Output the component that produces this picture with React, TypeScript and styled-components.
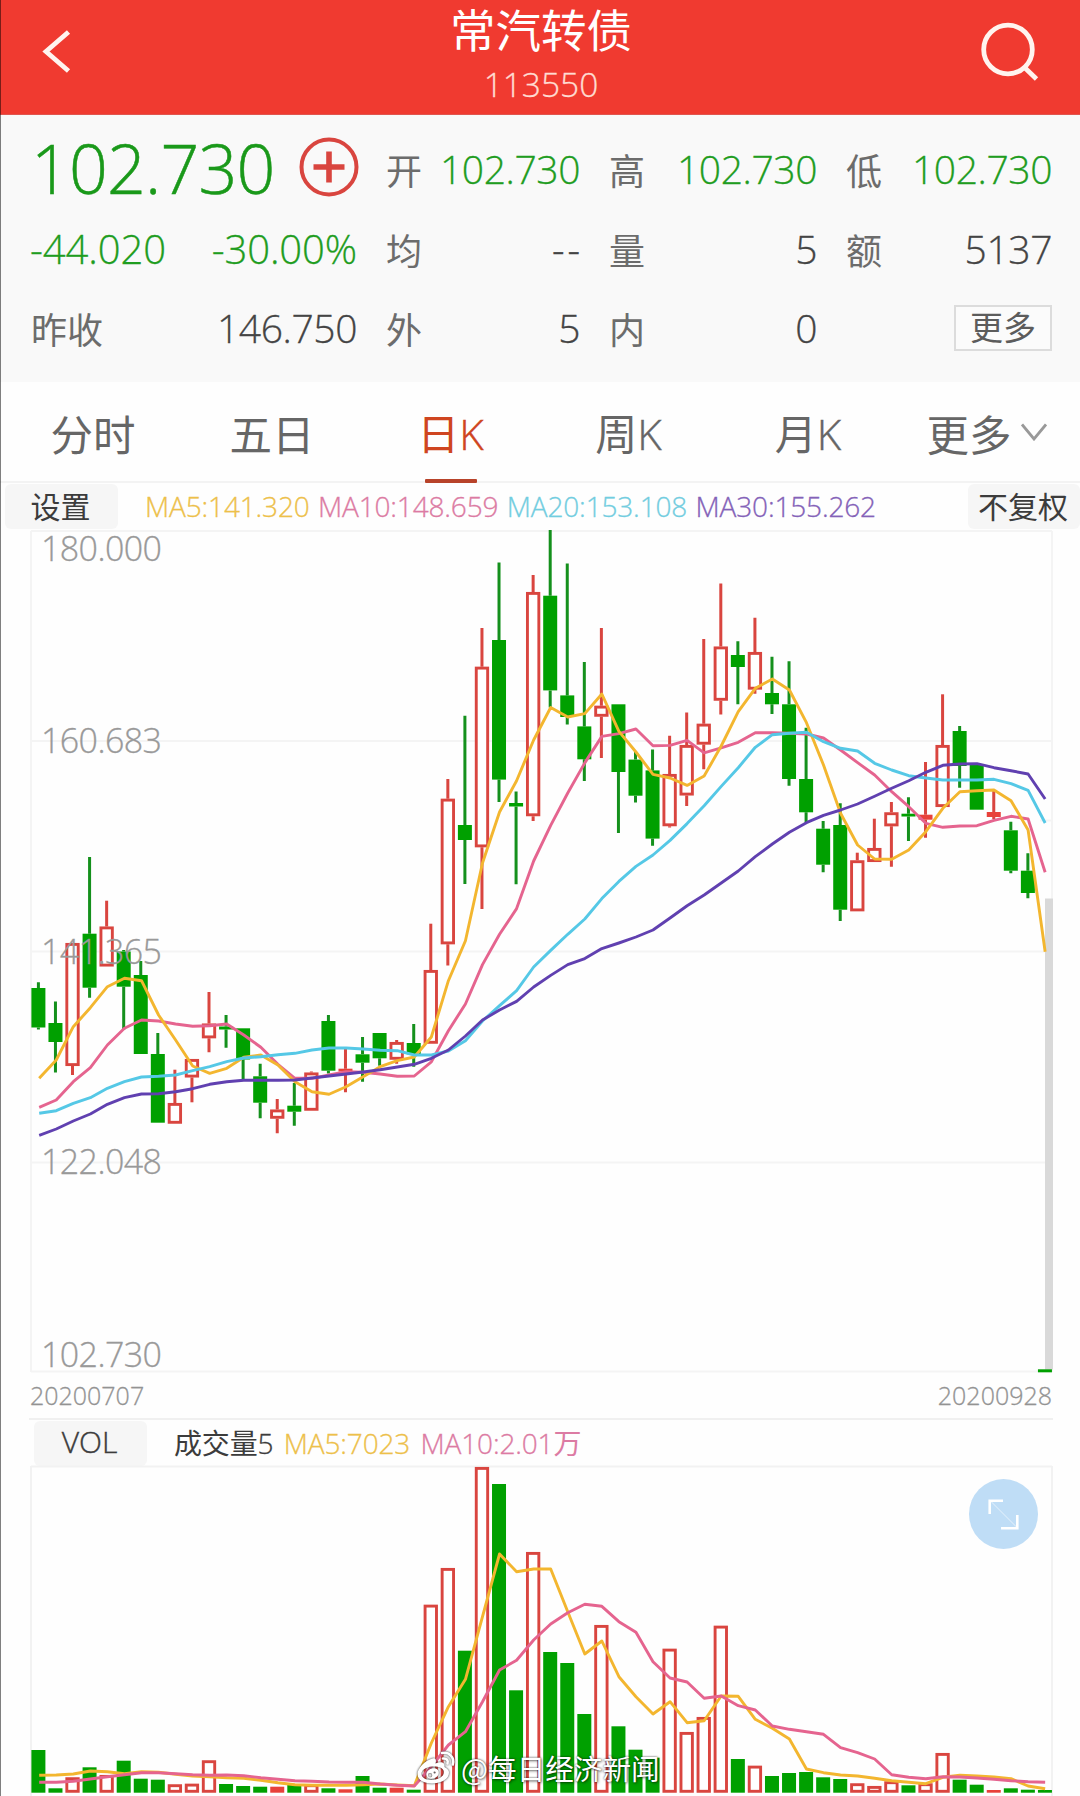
import React from "react";
import styled, { createGlobalStyle } from "styled-components";

const LATIN = `"Open Sans", "Noto Sans", "Noto Sans CJK SC", sans-serif`;
const CJK = `"Noto Sans CJK SC", "Open Sans", sans-serif`;

const RED = "#d9453f";
const GREEN = "#00a000";
const MA_COLORS = { ma5: "#f3b62f", ma10: "#e5648f", ma20: "#55c8e6", ma30: "#6040b0" };

const GlobalStyle = createGlobalStyle`
  * { box-sizing: border-box; }
  body { margin: 0; background: #fefefe; }
`;

const Page = styled.main`
  position: relative;
  width: 1080px;
  height: 1796px;
  overflow: hidden;
  display: flex;
  flex-direction: column;
  background: #fefefe;
  font-family: ${LATIN};
  font-weight: 300;
  -webkit-text-stroke: 0.3px currentColor;
  white-space: nowrap;
`;

const EdgeLine = styled.div`
  position: absolute;
  left: 0;
  top: 0;
  width: 1px;
  height: 100%;
  background: rgba(0, 0, 0, 0.5);
`;

/* ---------- header ---------- */
const Header = styled.header`
  flex: none;
  height: 115px;
  display: grid;
  grid-template-columns: 120px 1fr 120px;
  background: #f03a30;
  border-bottom: 1px solid #e0564f;
  color: #fff;
`;
const HeaderIcon = styled.svg`
  display: block;
  width: 120px;
  height: 114px;
  fill: none;
  stroke: #fff4ef;
  stroke-width: 4.8;
`;
const TitleBlock = styled.div`
  display: flex;
  flex-direction: column;
  align-items: center;
`;
const Title = styled.h1`
  margin: 5px 0 0 2px;
  font: 400 45.5px/56px Roboto, "Noto Sans CJK SC", sans-serif;
  -webkit-text-stroke: 0;
`;
const Code = styled.div`
  margin: -2px 0 0 2px;
  font-size: 33.5px;
  line-height: 50px;
  color: #ffdcd2;
`;

/* ---------- quote panel ---------- */
const Quote = styled.section`
  flex: none;
  height: 267px;
  padding: 14px 28px 0 31px;
  display: grid;
  grid-template-columns: 326px 223px 237px 1fr;
  grid-template-rows: 80px 79px 79px;
  background: #f9f9f9;
`;
const Cell = styled.div<{ $inset?: number }>`
  display: flex;
  align-items: center;
  justify-content: space-between;
  padding-left: ${(p) => p.$inset ?? 0}px;
`;
const Price = styled.span`
  margin: -3px 0 0 0;
  font-size: 68px;
  line-height: 76px;
  letter-spacing: -0.8px;
  -webkit-text-stroke: 0.5px currentColor;
  color: #1a991a;
`;
const Label = styled.span`
  font: 400 36px/44px ${CJK};
  -webkit-text-stroke: 0;
  color: #6c6c6c;
`;
const Value = styled.span<{ $down?: boolean; $wide?: boolean; $empty?: boolean }>`
  margin-left: ${(p) => (p.$wide ? -1 : 0)}px;
  margin-right: ${(p) => (p.$empty ? -3 : 0)}px;
  font-size: ${(p) => (p.$wide ? 40 : 39)}px;
  line-height: 50px;
  letter-spacing: ${(p) => (p.$empty ? 3 : p.$wide ? -0.1 : -0.4)}px;
  color: ${(p) => (p.$down ? "#1f9d1f" : "#444")};
`;
const AddIcon = styled.svg`
  width: 60px;
  height: 60px;
  margin: -4px -2px 0 0;
  fill: none;
  stroke: ${RED};
`;
const MoreButton = styled.button`
  width: 98px;
  height: 46px;
  margin: 0 0 0 auto;
  padding: 0 0 4px;
  border: 2px solid #dcdcdc;
  background: #fbfbfb;
  color: #5c5c5c;
  font: 400 33px/38px ${CJK};
  -webkit-text-stroke: 0;
`;

/* ---------- period tabs ---------- */
const Tabs = styled.nav`
  flex: none;
  height: 101px;
  padding: 0 3px;
  display: grid;
  grid-template-columns: repeat(6, 179px);
  border-bottom: 2px solid #f3f3f3;
`;
const Tab = styled.button<{ $active?: boolean; $shift?: number }>`
  position: relative;
  border: 0;
  padding: 2px ${(p) => p.$shift ?? 0}px 0 0;
  background: none;
  display: flex;
  align-items: center;
  justify-content: center;
  gap: 9px;
  font: 300 42px/60px "Open Sans", "Noto Sans CJK SC", sans-serif;
  -webkit-text-stroke: 0.4px currentColor;
  color: ${(p) => (p.$active ? "#cf4520" : "#666")};
  &::after {
    content: "";
    display: ${(p) => (p.$active ? "block" : "none")};
    position: absolute;
    bottom: -2px;
    left: 64px;
    width: 52px;
    height: 4px;
    border-radius: 1px;
    background: #b8432a;
  }
`;
const TabCjk = styled.span`
  font-family: ${CJK};
  font-weight: 400;
  -webkit-text-stroke: 0;
`;
const PairText = styled(TabCjk)`
  padding-left: 1px;
  font-size: 42.5px;
`;
const TabText = styled.span`
  display: flex;
  align-items: baseline;
`;
const Chevron = styled.svg`
  width: 26px;
  height: 18px;
  margin-top: -2px;
  fill: none;
  stroke: #999;
  stroke-width: 2.8;
`;

/* ---------- indicator rows ---------- */
const IndicatorRow = styled.div<{ $h: number; $left: number }>`
  flex: none;
  height: ${(p) => p.$h}px;
  padding-left: ${(p) => p.$left}px;
  display: flex;
  align-items: center;
`;
const Chip = styled.button<{ $w: number; $size: number; $latin?: boolean }>`
  flex: none;
  width: ${(p) => p.$w}px;
  height: 45px;
  padding: 0 2px 3px 0;
  border: 0;
  border-radius: 6px;
  background: #f6f6f6;
  color: #3c3c3c;
  font: ${(p) => (p.$latin ? 300 : 400)} ${(p) => p.$size}px/41px ${(p) => (p.$latin ? LATIN : CJK)};
  -webkit-text-stroke: ${(p) => (p.$latin ? "0.4px currentColor" : "0")};
`;
const Readings = styled.div<{ $left: number; $gap: number }>`
  flex: 1;
  margin: -2px 0 0 ${(p) => p.$left}px;
  display: flex;
  align-items: baseline;
  gap: ${(p) => p.$gap}px;
`;
const Reading = styled.span<{ $color: string }>`
  font-size: 28px;
  line-height: 40px;
  letter-spacing: -0.15px;
  color: ${(p) => p.$color};
`;

/* ---------- charts ---------- */
const ChartSvg = styled.svg<{ $h: number }>`
  flex: none;
  display: block;
  width: 1080px;
  height: ${(p) => p.$h}px;
  overflow: visible;
`;
const AxisText = styled.text`
  font: 300 34px ${LATIN};
  letter-spacing: -0.6px;
  fill: #999;
  stroke: #999;
  stroke-width: 0.3px;
  -webkit-text-stroke: 0;
`;
const Dates = styled.div`
  flex: none;
  height: 48px;
  margin: 0 27px 0 29px;
  padding: 0 1px 0 1px;
  display: flex;
  align-items: center;
  justify-content: space-between;
  font-size: 25px;
  color: #939393;
  border-bottom: 2px solid #f0f0f0;
`;
const ExpandButton = styled.button`
  position: absolute;
  left: 969px;
  top: 1479px;
  width: 69px;
  height: 70px;
  padding: 0;
  border: 0;
  border-radius: 50%;
  background: #bfddf6;
`;
const ExpandIcon = styled.svg`
  display: block;
  width: 69px;
  height: 70px;
  fill: none;
  stroke: #fff;
`;
const Watermark = styled.div`
  position: absolute;
  left: 416px;
  top: 1749px;
  height: 38px;
  display: flex;
  align-items: center;
  gap: 5px;
  color: #fff;
  font: 400 28.6px/38px ${CJK};
  -webkit-text-stroke: 0;
  text-shadow: 0 0 2px rgba(0, 0, 0, 0.7), 1px 1px 3px rgba(0, 0, 0, 0.5);
`;
const WeiboIcon = styled.svg`
  width: 40px;
  height: 36px;
  filter: drop-shadow(0 0 1px rgba(0, 0, 0, 0.85));
`;

type Kind = "g" | "r" | "f";
type Candle = [Kind, number, number, number, number];

/* kind (g falling, r rising, f rising with filled body), high, body top, body bottom, low */
const CANDLES: Candle[] = [
  ["g", 982.3, 988, 1027.5, 1029.5], ["g", 1001.5, 1023, 1042, 1072.5], ["r", 943, 943, 1066, 1075],
  ["g", 857, 933.7, 987.7, 997.7], ["r", 900.7, 926.5, 966.5, 966.5], ["g", 950, 951.5, 986.7, 1030],
  ["g", 961, 975, 1054, 1054], ["g", 1033, 1054, 1122.7, 1122.7], ["r", 1069.7, 1103, 1123.7, 1123.7],
  ["r", 1059, 1059, 1077.5, 1102.3], ["r", 992, 1023.5, 1038.3, 1052.3], ["g", 1015, 1026.5, 1029.5, 1047.7],
  ["g", 1028.3, 1028.3, 1059.5, 1080], ["g", 1063.7, 1076.3, 1102.7, 1118.3], ["r", 1099, 1109.5, 1118.7, 1133.3],
  ["g", 1083, 1105.7, 1111.7, 1125.7], ["r", 1071.5, 1072.5, 1110.7, 1110.7], ["g", 1015, 1021, 1070.7, 1073.5],
  ["f", 1047, 1068.7, 1071.5, 1092.3], ["g", 1037, 1054.3, 1062.7, 1081.7], ["g", 1033, 1033, 1058.3, 1065.7],
  ["r", 1040, 1042, 1059.7, 1063.7], ["g", 1024, 1043, 1054.3, 1066.7], ["r", 923.7, 970, 1043.7, 1043.7],
  ["r", 779, 798.7, 944.3, 965.4], ["g", 715.7, 825, 840, 884], ["r", 628, 666.7, 847.3, 909],
  ["g", 562.5, 640, 779.6, 802], ["g", 791.4, 803, 806.5, 884.3], ["r", 575, 592, 816.2, 821],
  ["g", 530, 595.7, 690.4, 707.5], ["g", 563.6, 695.4, 717, 724.6], ["g", 662, 726.4, 759.3, 781],
  ["r", 628, 705.7, 716.7, 758], ["g", 704.3, 704.3, 772, 833], ["g", 752, 759.6, 795.7, 802.5],
  ["g", 749.6, 770.4, 838.6, 845.7], ["r", 735.7, 774, 826.2, 827.5], ["r", 712.5, 745, 795.5, 806],
  ["r", 639, 723.7, 744.6, 769.3], ["r", 583.6, 646.5, 700.7, 714.6], ["g", 641.3, 655, 667, 704.3],
  ["r", 617.7, 652, 689.6, 693.7], ["g", 656.7, 693, 704.3, 714], ["g", 661.3, 704.3, 779, 785.7],
  ["g", 727.7, 779, 812.3, 822.7], ["g", 821, 828.7, 864.7, 872.3], ["g", 803.3, 825, 909.7, 921],
  ["r", 852.7, 860.3, 911.3, 911.3], ["r", 818.7, 848, 862, 862], ["r", 802, 812.3, 826.3, 866.7],
  ["g", 797.3, 813.7, 816.5, 841], ["f", 762, 814.7, 819.7, 837.7], ["r", 694.3, 745, 807, 807],
  ["g", 726, 731, 766, 787.7], ["g", 763, 765, 809.7, 809.7], ["f", 791, 812, 817, 819.3],
  ["g", 821.7, 830.3, 870.7, 873.3], ["g", 853.3, 870.7, 893, 898.3], ["g", 1369.3, 1369.3, 1372.3, 1372.3],
];

const PRICE_MA: Record<keyof typeof MA_COLORS, number[]> = {
  ma10: [1107.3, 1100, 1081.7, 1067.7, 1045, 1028.3, 1020, 1021, 1024, 1026.3, 1025.7, 1024, 1035, 1047.3, 1064.3, 1078.3, 1078.3, 1075, 1071.7, 1072.3, 1074, 1076.3, 1076, 1061.8, 1030.7, 1004, 964.6, 934.3, 908.6, 861, 825.4, 793, 762.9, 736.4, 733.6, 729, 745.7, 745.4, 740.4, 752.9, 747.9, 742.3, 732.7, 732.7, 733.3, 734, 738, 750, 762.7, 775, 791.7, 806.7, 823.3, 827.3, 826, 825.7, 820.3, 816.3, 819, 872.3],
  ma5: [1078.3, 1060, 1026.7, 1007.7, 986.7, 978.3, 980.7, 1015, 1040, 1066, 1073.3, 1068.3, 1057.3, 1055, 1065, 1081.7, 1091.7, 1094.3, 1086.7, 1076.7, 1066.7, 1060.7, 1057, 1037, 980.7, 940.7, 863, 812, 780.7, 740, 707.5, 717, 713.6, 694, 731.4, 752, 774.3, 778, 785.4, 776, 746, 711.7, 688.3, 679, 690, 722.7, 765, 813.3, 845, 859, 859.3, 850, 831.7, 808.3, 791.7, 790.7, 790, 800.7, 830, 951.7],
  ma20: [1113.3, 1110.7, 1103.3, 1097.7, 1088.3, 1081.7, 1077, 1076.3, 1075, 1070.7, 1066.7, 1061.7, 1058, 1056.7, 1054.7, 1053.3, 1050, 1048, 1048, 1049, 1050.3, 1050.7, 1055, 1055, 1051, 1040.7, 1021, 1005.7, 990.7, 967, 950.4, 934.3, 919, 898.6, 881.4, 866.4, 855, 840.4, 823.6, 805.7, 786.4, 767.7, 747.3, 734.7, 733.3, 732.3, 741.7, 748.3, 751, 763.3, 770, 775.7, 778, 780, 780, 780, 779.3, 783.7, 790.3, 823],
  ma30: [1135.3, 1129, 1121, 1114, 1104.3, 1097.7, 1094, 1093.7, 1091.7, 1088.7, 1084.3, 1081.7, 1080.3, 1080.3, 1080.3, 1080, 1078, 1076, 1074, 1072, 1069.7, 1067, 1064.3, 1058.3, 1050, 1036, 1020, 1010, 1001.4, 987, 975.4, 964.6, 958.6, 948.6, 943, 937, 930, 918, 905.7, 895, 883, 871, 856.7, 844, 832.3, 822.7, 815.3, 810, 804, 796.3, 788.3, 780.7, 772.3, 765.3, 764, 763.7, 767.7, 770.7, 774, 799],
};

const VOL_TOPS = [1750, 1788.3, 1777.3, 1767.3, 1775, 1760.7, 1778.7, 1779.7, 1784.3, 1783.7, 1760.3, 1784, 1786, 1786.7, 1786.7, 1784.3, 1784.3, 1788.3, 1789.3, 1776, 1787.7, 1787.7, 1789.7, 1604.7, 1568, 1650.7, 1467, 1484, 1690.3, 1552, 1652, 1663, 1714, 1625, 1726.3, 1749.7, 1757.7, 1648.7, 1732, 1717, 1625.7, 1759, 1765.7, 1776, 1773, 1772, 1777.3, 1779, 1783.3, 1786, 1781.3, 1785.3, 1783.3, 1753, 1779.7, 1784.7, 1790, 1788.3, 1789.7, 1790];
const VOL_MA5 = [1775.3, 1775, 1774, 1771, 1771.7, 1773.7, 1771.7, 1772.3, 1774.3, 1776, 1776.7, 1777.7, 1778.3, 1780.3, 1782.7, 1784.7, 1785.3, 1785.3, 1785.3, 1784.7, 1784, 1785, 1785.7, 1743, 1706.7, 1679.3, 1616.7, 1554, 1571.7, 1569, 1569, 1611.7, 1654, 1641, 1676.7, 1696.7, 1714, 1701.7, 1722.7, 1720.7, 1696, 1696.3, 1719.3, 1728.3, 1739, 1769, 1772.7, 1775, 1776, 1778.3, 1780.7, 1782.3, 1783.7, 1777.3, 1775.3, 1776, 1777, 1778.7, 1786, 1788.7];
const VOL_MA10 = [1782.3, 1782.3, 1781.3, 1779, 1776.7, 1774.7, 1772.7, 1772.7, 1773.7, 1774.7, 1775.3, 1775, 1775.7, 1777.7, 1779.3, 1780.7, 1781.3, 1782, 1782.3, 1782.3, 1784, 1785.3, 1786, 1766.7, 1745, 1731.7, 1701.7, 1670, 1660.3, 1640, 1624, 1612.7, 1604.3, 1606.3, 1621.7, 1632.3, 1661.7, 1678, 1682, 1698.3, 1696, 1705.7, 1710, 1726, 1729.3, 1731.7, 1734.3, 1747.7, 1752.7, 1759, 1774.7, 1777.3, 1778.7, 1776.7, 1777, 1778, 1779.3, 1780.7, 1781.7, 1782.3];

const VOL_BASE = 1792.7;
const candleX = (i: number) => 38.4 + i * 17.06;
const lineX = (i: number) => 39.2 + i * 17.05;

const Bar = ({ x, top, bottom, kind }: { x: number; top: number; bottom: number; kind: Kind }) =>
  kind === "r" ? (
    <rect x={x - 5.7} y={top + 1.4} width={11.4} height={Math.max(bottom - top - 2.8, 0.5)} fill="#fff" stroke={RED} strokeWidth={2.9} />
  ) : (
    <rect x={x - 7} y={top} width={14} height={bottom - top} fill={kind === "g" ? GREEN : "#e8413a"} />
  );

const Line = ({ values, color }: { values: number[]; color: string }) => (
  <polyline
    points={values.map((y, i) => `${lineX(i)},${y}`).join(" ")}
    fill="none"
    stroke={color}
    strokeWidth={2.9}
    strokeLinejoin="round"
  />
);

const PriceChart = () => (
  <ChartSvg $h={842} viewBox="0 530 1080 842">
    <g stroke="#f4f4f4" strokeWidth={2} fill="none">
      <path d="M31 531H1052M31 741H1052M31 951.5H1052M31 1162.5H1052M31 1371.5H1052M31 531V1372M1052 531V1372M1040 820.5H1053" />
    </g>
    <rect x={1045} y={898.5} width={8} height={471} fill="#d9d9d9" />
    {CANDLES.map(([kind, high, top, bottom, low], i) => {
      const x = candleX(i);
      const color = kind === "g" ? "#14901c" : RED;
      return (
        <g key={i}>
          <path d={`M${x} ${high}V${top}M${x} ${bottom}V${low}`} stroke={color} strokeWidth={3} />
          <Bar x={x} top={top} bottom={bottom} kind={kind} />
        </g>
      );
    })}
    {(Object.keys(PRICE_MA) as (keyof typeof MA_COLORS)[]).map((key) => (
      <Line key={key} values={PRICE_MA[key]} color={MA_COLORS[key]} />
    ))}
    <AxisText x={41} y={561}>180.000</AxisText>
    <AxisText x={41} y={753}>160.683</AxisText>
    <AxisText x={41} y={963.5}>141.365</AxisText>
    <AxisText x={41} y={1174}>122.048</AxisText>
    <AxisText x={41} y={1367}>102.730</AxisText>
  </ChartSvg>
);

const VolumeChart = () => (
  <ChartSvg $h={330} viewBox="0 1466 1080 330">
    <path d="M31 1466.5H1052M31 1466V1796M1052 1466V1796" stroke="#f2f2f2" strokeWidth={2} fill="none" />
    {VOL_TOPS.map((top, i) => {
      const kind = CANDLES[i][0] === "g" ? "g" : VOL_BASE - top < 6.2 ? "f" : "r";
      return <Bar key={i} x={candleX(i)} top={top} bottom={VOL_BASE} kind={kind} />;
    })}
    <Line values={VOL_MA5} color={MA_COLORS.ma5} />
    <Line values={VOL_MA10} color={MA_COLORS.ma10} />
  </ChartSvg>
);

const Field = ({ label, value, down, inset }: { label: string; value: string; down?: boolean; inset?: number }) => (
  <Cell $inset={inset}>
    <Label>{label}</Label>
    <Value $down={down} $empty={value === "--"}>{value}</Value>
  </Cell>
);

export default function App() {
  return (
    <Page>
      <GlobalStyle />
      <Header>
        <HeaderIcon viewBox="0 0 120 114">
          <path d="M68.500 32L46 51.500L68.500 71" />
        </HeaderIcon>
        <TitleBlock>
          <Title>常汽转债</Title>
          <Code>113550</Code>
        </TitleBlock>
        <HeaderIcon viewBox="0 0 120 114">
          <circle cx={48} cy={49.5} r={24.3} />
          <path d="M64 67L76.500 79" />
        </HeaderIcon>
      </Header>

      <Quote>
        <Cell>
          <Price>102.730</Price>
          <AddIcon viewBox="0 0 60 60">
            <circle cx={30} cy={30} r={27.5} strokeWidth={4} />
            <path d="M14.500 30H45.500M30 14.500V45.500" strokeWidth={5.6} />
          </AddIcon>
        </Cell>
        <Field label="开" value="102.730" down inset={29} />
        <Field label="高" value="102.730" down inset={29} />
        <Field label="低" value="102.730" down inset={29} />

        <Cell>
          <Value $down $wide>-44.020</Value>
          <Value $down $wide>-30.00%</Value>
        </Cell>
        <Field label="均" value="--" inset={29} />
        <Field label="量" value="5" inset={29} />
        <Field label="额" value="5137" inset={29} />

        <Field label="昨收" value="146.750" />
        <Field label="外" value="5" inset={29} />
        <Field label="内" value="0" inset={29} />
        <Cell>
          <MoreButton>更多</MoreButton>
        </Cell>
      </Quote>

      <Tabs>
        <Tab><PairText>分时</PairText></Tab>
        <Tab><PairText>五日</PairText></Tab>
        <Tab $active><TabText><TabCjk>日</TabCjk>K</TabText></Tab>
        <Tab $shift={2}><TabText><TabCjk>周</TabCjk>K</TabText></Tab>
        <Tab $shift={1}><TabText><TabCjk>月</TabCjk>K</TabText></Tab>
        <Tab $shift={3}>
          <PairText>更多</PairText>
          <Chevron viewBox="0 0 26 18"><path d="M1 1.500L13 16L25 1.500" /></Chevron>
        </Tab>
      </Tabs>

      <IndicatorRow $h={47} $left={5}>
        <Chip $w={113} $size={30}>设置</Chip>
        <Readings $left={27} $gap={8.4}>
          <Reading $color="#edc04a">MA5:141.320</Reading>
          <Reading $color="#dc7ba3">MA10:148.659</Reading>
          <Reading $color="#72cde0">MA20:153.108</Reading>
          <Reading $color="#8462b8">MA30:155.262</Reading>
        </Readings>
        <Chip $w={112} $size={30}>不复权</Chip>
      </IndicatorRow>

      <PriceChart />

      <Dates>
        <span>20200707</span>
        <span>20200928</span>
      </Dates>

      <IndicatorRow $h={46} $left={34}>
        <Chip $w={113} $size={30} $latin>VOL</Chip>
        <Readings $left={27} $gap={10.4}>
          <Reading $color="#3c3c3c"><TabCjk>成交量</TabCjk>5</Reading>
          <Reading $color="#edc04a">MA5:7023</Reading>
          <Reading $color="#dc7ba3">MA10:2.01<TabCjk>万</TabCjk></Reading>
        </Readings>
      </IndicatorRow>

      <VolumeChart />

      <ExpandButton aria-label="expand">
        <ExpandIcon viewBox="0 0 70 70">
          <path d="M21 35V21.500H34.500M32.500 49.500H49V36" strokeWidth={2.6} />
          <path d="M22 22L49 49" strokeWidth={1} opacity={0.6} />
        </ExpandIcon>
      </ExpandButton>

      <Watermark>
        <WeiboIcon viewBox="0 0 40 36">
          <path
            fill="#fff"
            fillRule="evenodd"
            d="M15 9C19 7 21 9 19.500 13.500C24 11.500 29 11.500 28.500 16.500C28.300 18 32.500 18 33 22C33.500 29 25 33.500 16 33.500C8 33.500 1.500 30 1.500 24C1.500 18 9 11 15 9ZM16 16.500C9.500 17 5 20.500 5.500 24.500C6 28.500 11.500 30.500 17.500 29.800C24 29 28.500 25.500 28 21.500C27.500 18 22 16 16 16.500Z"
          />
          <path
            fill="#fff"
            fillRule="evenodd"
            d="M16 18.500C20.500 17.500 24 20.500 22.500 24.500C21 28.500 15 30 12 27.500C8.500 24.500 11 19.500 16 18.500ZM14 23A2.200 2.200 0 1 0 14.100 27.400A2.200 2.200 0 1 0 14 23ZM18.500 21.500A1 1 0 1 0 18.600 23.500A1 1 0 1 0 18.500 21.500Z"
          />
          <path fill="none" stroke="#fff" strokeWidth={2.6} strokeLinecap="round" d="M26 3C33 1.500 39 7.500 36.800 14.500M27 8.500C30.500 8 32.500 10.500 31.500 13.500" />
        </WeiboIcon>
        @每日经济新闻
      </Watermark>
      <EdgeLine />
    </Page>
  );
}
